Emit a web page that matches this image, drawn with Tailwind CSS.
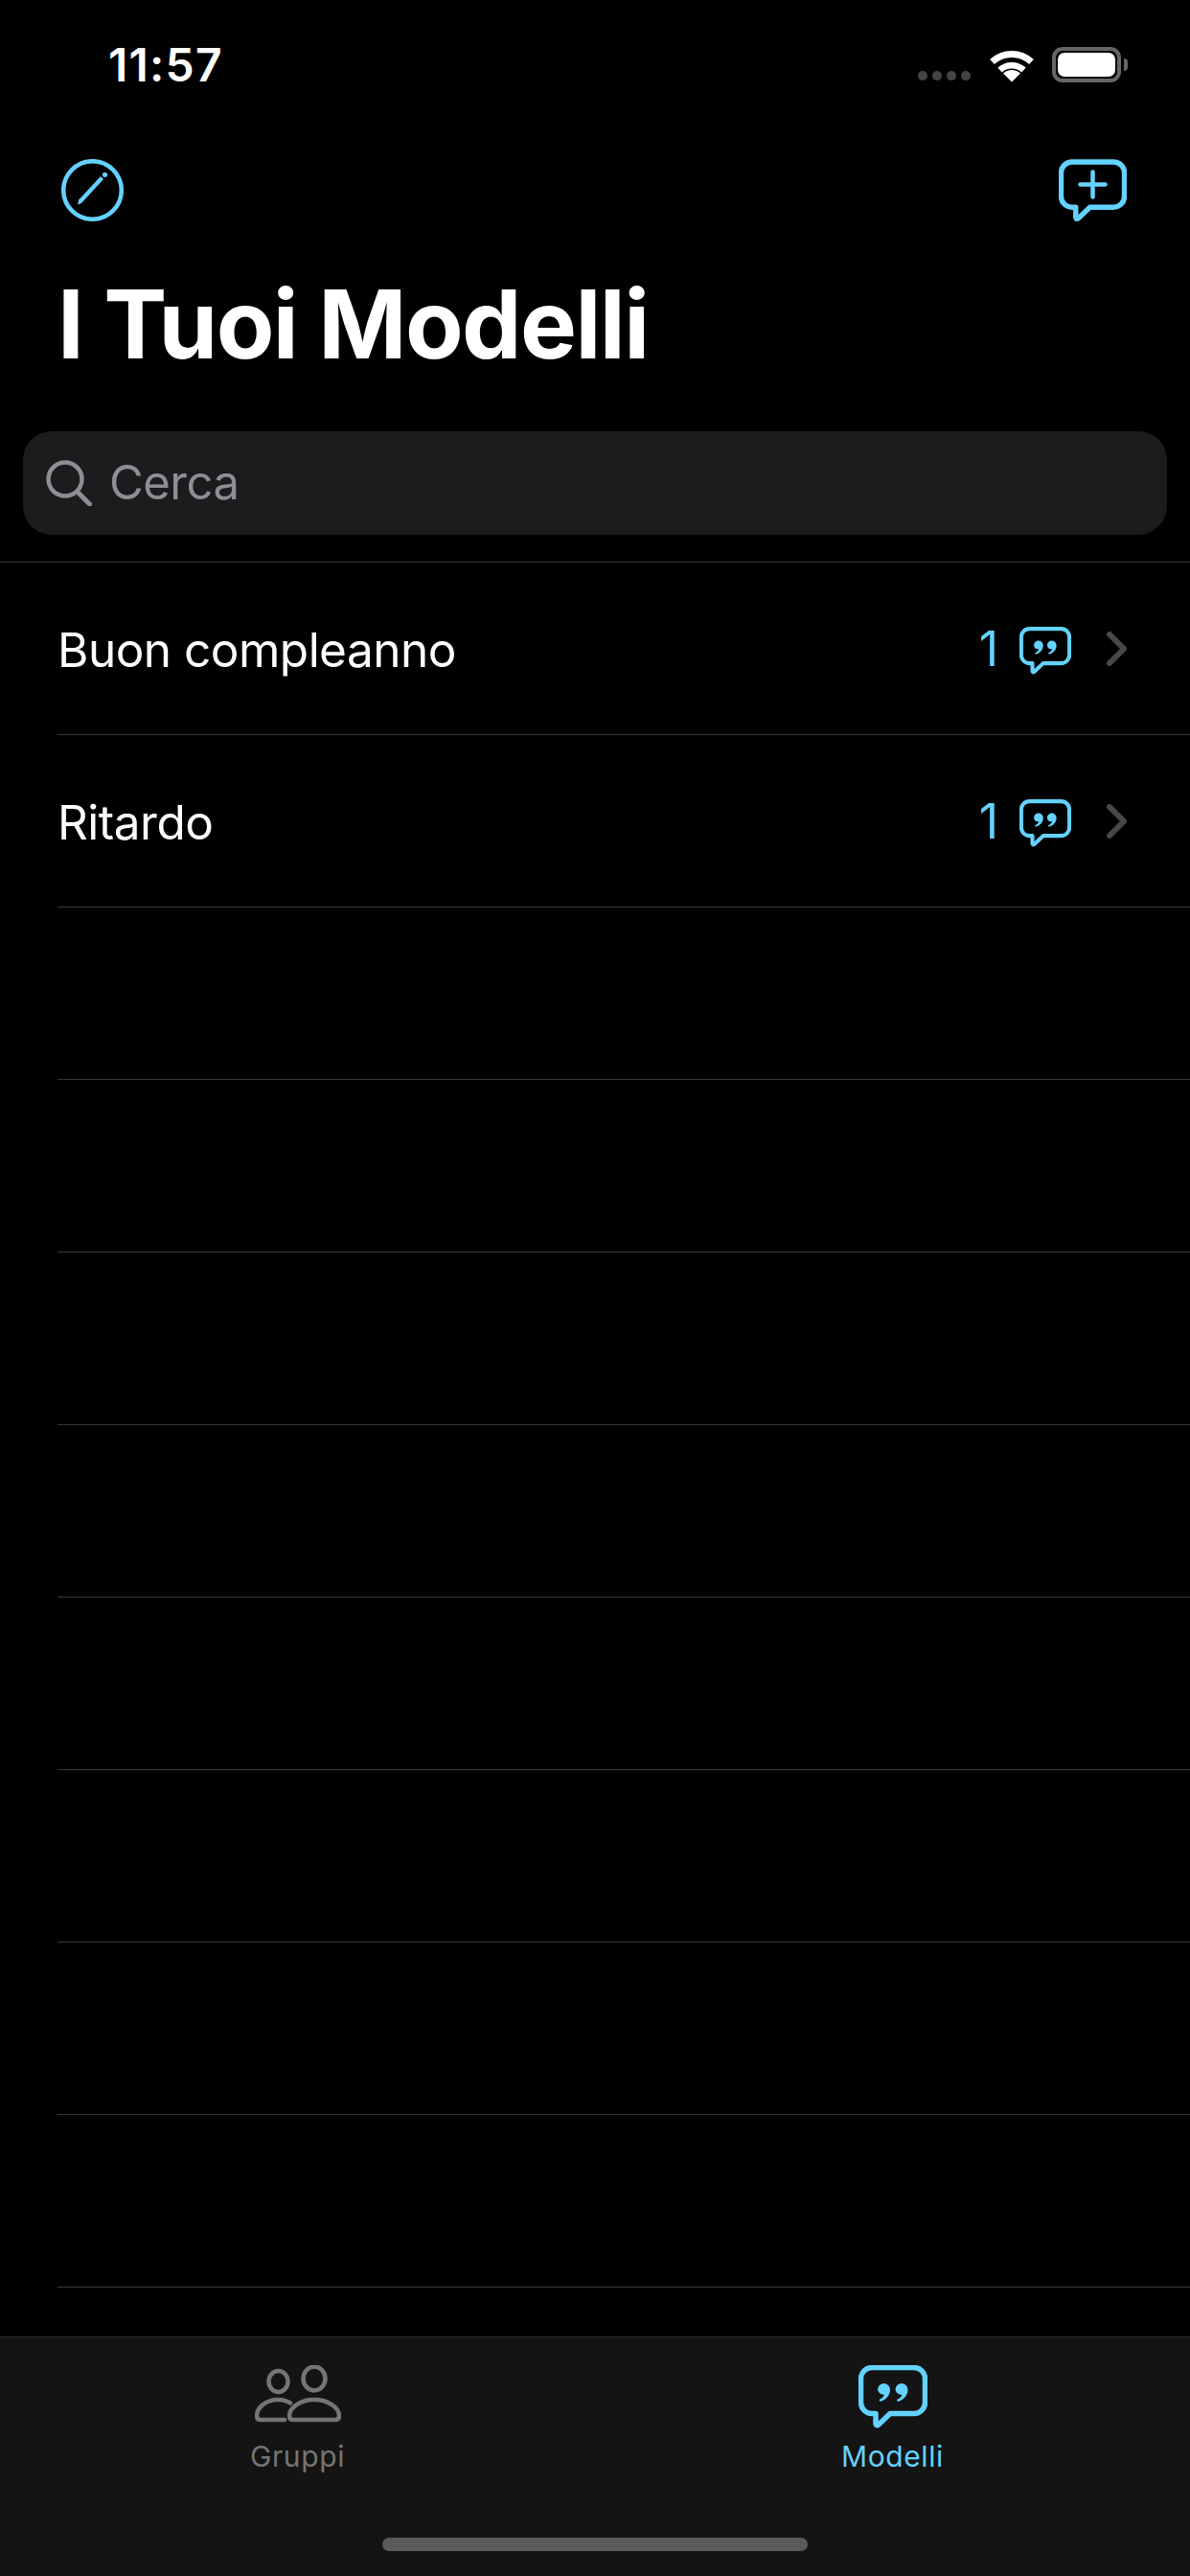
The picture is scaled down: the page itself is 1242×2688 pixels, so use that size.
<!DOCTYPE html>
<html lang="it">
  <head>
    <meta charset="UTF-8" />
    <meta name="viewport" content="width=device-width, initial-scale=1.0" />
    <title>I Tuoi Modelli</title>
    <script src="https://cdn.jsdelivr.net/npm/@tailwindcss/browser@4"></script>
  </head>
  <body class="bg-black">
    <svg class="hidden">
      <symbol id="bubble" viewBox="0 0 72 66">
        <path d="M14 2.500H58a11.500 11.500 0 0 1 11.500 11.500V39a11.500 11.500 0 0 1-11.500 11.500H33L21 62q-2.500 2-3 -1V50.500H14a11.500 11.500 0 0 1-11.500-11.500V14A11.500 11.500 0 0 1 14 2.500Z" fill="none" stroke="currentColor" stroke-linejoin="round" />
      </symbol>
      <symbol id="quotes" viewBox="0 0 72 66">
        <path fill="currentColor" d="M20 25.500a6.500 6.500 0 1 1 13 0c0 6-4.500 11-10.500 12.500l-1-2c3-1.200 5-3 5.300-5.200a6.500 6.500 0 0 1-6.800-5.300Z" />
        <path fill="currentColor" d="M38.500 25.500a6.500 6.500 0 1 1 13 0c0 6-4.500 11-10.500 12.500l-1-2c3-1.200 5-3 5.300-5.200a6.500 6.500 0 0 1-6.800-5.300Z" />
      </symbol>
    </svg>

    <div class="w-[1242px] h-[2688px] flex flex-col overflow-hidden font-['Inter',sans-serif] text-white">
      <!-- status bar -->
      <div class="h-[135px] shrink-0 flex justify-between items-start pt-[43px] pl-[113px] pr-[65px]">
        <span class="text-[48px] leading-[50px] font-semibold tracking-[1.200px]">11:57</span>
        <div class="flex items-start pt-[6px]">
          <div class="flex gap-[5px] mt-[25px] mr-[19px]">
            <div class="w-[10px] h-[10px] rounded-full bg-[#444]"></div>
            <div class="w-[10px] h-[10px] rounded-full bg-[#444]"></div>
            <div class="w-[10px] h-[10px] rounded-full bg-[#444]"></div>
            <div class="w-[10px] h-[10px] rounded-full bg-[#444]"></div>
          </div>
          <svg class="w-[48px] h-[37px] mr-[18px]" viewBox="0 0 48 37" fill="none" stroke="white">
            <path d="M3.500 15.500A30 30 0 0 1 44.500 15.500" stroke-width="7" />
            <path d="M11.500 24A18.500 18.500 0 0 1 36.500 24" stroke-width="6.500" />
            <path d="M24 36.500L15 27.500A13 13 0 0 1 33 27.500Z" fill="white" stroke="none" />
          </svg>
          <div class="w-[72px] h-[37px] rounded-[11px] border-[4px] border-[#666] p-[2px]">
            <div class="w-full h-full rounded-[7px] bg-white"></div>
          </div>
          <div class="w-[4px] h-[13px] mt-[12px] ml-[3px] rounded-r-full bg-[#666]"></div>
        </div>
      </div>

      <!-- nav buttons -->
      <div class="h-[110px] shrink-0 flex justify-between items-start pt-[31px] pl-[64px] pr-[66px] text-[#64d2ff]">
        <svg class="w-[65px] h-[65px]" viewBox="0 0 65 65" fill="none">
          <circle cx="32.500" cy="32.500" r="30.300" stroke="currentColor" stroke-width="4.500" />
          <path d="M17 47.500l1.200-5L41 18l3 3L21 46Z" fill="currentColor" />
          <circle cx="45.500" cy="16.300" r="2.600" fill="currentColor" />
        </svg>
        <div class="relative w-[71px] h-[66px]">
          <svg class="w-[71px] h-[66px]" stroke-width="5.500"><use href="#bubble" /></svg>
          <svg class="absolute left-[20px] top-[11px] w-[31px] h-[31px]" viewBox="0 0 31 31" stroke="currentColor" stroke-width="4.500" stroke-linecap="round">
            <path d="M15.500 2.500V28.500M2.500 15.500H28.500" />
          </svg>
        </div>
      </div>

      <!-- title -->
      <div class="h-[205px] shrink-0 pl-[60px] pt-[33px]">
        <h1 class="text-[99px] leading-[120px] font-bold tracking-[-1.500px]">I Tuoi Modelli</h1>
      </div>

      <!-- search -->
      <div class="shrink-0 h-[137px] px-[24px] border-b border-[#38383a]">
        <div class="h-[108px] rounded-[30px] bg-[#1c1c1e] flex items-center pl-[24px] text-[#8e8e93]">
          <svg class="w-[48px] h-[48px]" viewBox="0 0 48 48" fill="none" stroke="currentColor" stroke-width="4.500" stroke-linecap="round">
            <circle cx="20" cy="20" r="17.500" />
            <path d="M32.500 33L45.500 46" stroke-width="5" />
          </svg>
          <span class="ml-[18px] text-[49px] leading-[60px] tracking-[-0.5px]">Cerca</span>
        </div>
      </div>

      <!-- list -->
      <div class="shrink-0 pl-[60px]">
        <div class="h-[180px] border-b border-[#38383a] flex items-center pr-[66px]">
          <span class="text-[49.500px] leading-[60px] flex-1 tracking-[-0.5px] mt-[2px]">Buon compleanno</span>
          <span class="text-[50px] leading-[60px] text-[#64d2ff]">1</span>
          <div class="relative w-[54px] h-[50px] ml-[22px] mt-[4px] text-[#64d2ff]">
            <svg class="w-[54px] h-[50px]" stroke-width="5.500"><use href="#bubble" /></svg>
            <svg class="absolute inset-0 w-[54px] h-[50px]"><use href="#quotes" /></svg>
          </div>
          <svg class="w-[21px] h-[36px] ml-[37px]" viewBox="0 0 21 36" fill="none" stroke="#48484a" stroke-width="6" stroke-linecap="round" stroke-linejoin="round">
            <path d="M3 3L18 18L3 33" />
          </svg>
        </div>
        <div class="h-[180px] border-b border-[#38383a] flex items-center pr-[66px]">
          <span class="text-[49.500px] leading-[60px] flex-1 tracking-[-0.5px] mt-[2px]">Ritardo</span>
          <span class="text-[50px] leading-[60px] text-[#64d2ff]">1</span>
          <div class="relative w-[54px] h-[50px] ml-[22px] mt-[4px] text-[#64d2ff]">
            <svg class="w-[54px] h-[50px]" stroke-width="5.500"><use href="#bubble" /></svg>
            <svg class="absolute inset-0 w-[54px] h-[50px]"><use href="#quotes" /></svg>
          </div>
          <svg class="w-[21px] h-[36px] ml-[37px]" viewBox="0 0 21 36" fill="none" stroke="#48484a" stroke-width="6" stroke-linecap="round" stroke-linejoin="round">
            <path d="M3 3L18 18L3 33" />
          </svg>
        </div>
        <div class="h-[180px] border-b border-[#38383a]"></div>
        <div class="h-[180px] border-b border-[#38383a]"></div>
        <div class="h-[180px] border-b border-[#38383a]"></div>
        <div class="h-[180px] border-b border-[#38383a]"></div>
        <div class="h-[180px] border-b border-[#38383a]"></div>
        <div class="h-[180px] border-b border-[#38383a]"></div>
        <div class="h-[180px] border-b border-[#38383a]"></div>
        <div class="h-[180px] border-b border-[#38383a]"></div>
      </div>

      <div class="flex-1"></div>

      <!-- tab bar -->
      <div class="relative h-[250px] shrink-0 bg-[#141414] border-t border-[#2c2c2e]">
        <div class="grid grid-cols-2">
          <div class="flex flex-col items-center pt-[29px] text-[#757575]">
            <svg class="w-[90px] h-[61px]" viewBox="0 0 90 61" fill="none" stroke="currentColor" stroke-width="4.500" stroke-linecap="round">
              <ellipse cx="24.500" cy="17" rx="10" ry="11" />
              <ellipse cx="62" cy="14" rx="11.500" ry="12.500" />
              <path d="M40 57H84Q88 57 88 53C88 44 76 36 62 36C48 36 36 44 36 53Q36 57 40 57Z" />
              <path d="M31 57H6Q2 57 2 53C2 44 12 36 24 36C29 36 33 37 37 39.500" />
            </svg>
            <span class="mt-[16px] text-[30px] leading-[36px] tracking-[0.6px]">Gruppi</span>
          </div>
          <div class="flex flex-col items-center pt-[29px] text-[#64d2ff]">
            <div class="relative w-[72px] h-[66px]">
              <svg class="w-[72px] h-[66px]" stroke-width="5.500"><use href="#bubble" /></svg>
              <svg class="absolute inset-0 w-[72px] h-[66px]"><use href="#quotes" /></svg>
            </div>
            <span class="mt-[11px] text-[30px] leading-[36px] tracking-[0.6px]">Modelli</span>
          </div>
        </div>
        <div class="absolute bottom-[26px] left-[399px] w-[444px] h-[14px] rounded-full bg-[#5a5a5a]"></div>
      </div>
    </div>
  </body>
</html>
